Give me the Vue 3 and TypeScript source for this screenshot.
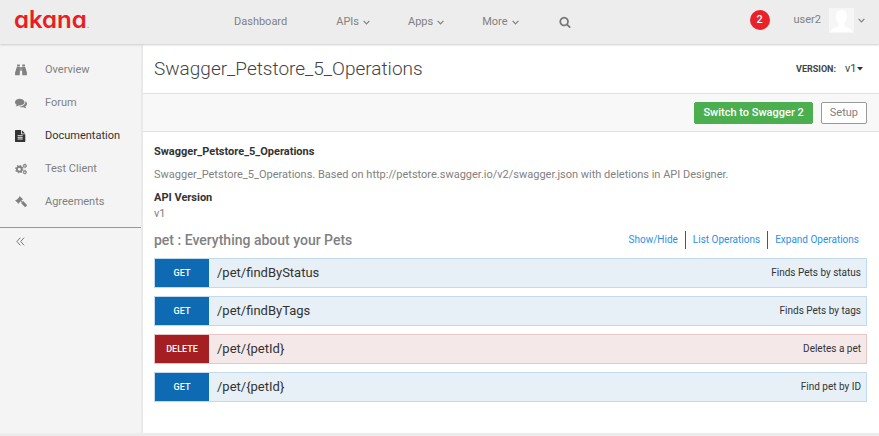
<script setup lang="ts">
import { ref } from 'vue'

interface NavItem {
  label: string
  menu: boolean
}

interface SideItem {
  label: string
  icon: 'binoculars' | 'comments' | 'file' | 'cogs' | 'gavel'
}

interface Operation {
  method: 'GET' | 'DELETE'
  path: string
  summary: string
}

const navItems: NavItem[] = [
  { label: 'Dashboard', menu: false },
  { label: 'APIs', menu: true },
  { label: 'Apps', menu: true },
  { label: 'More', menu: true },
]

const sideItems: SideItem[] = [
  { label: 'Overview', icon: 'binoculars' },
  { label: 'Forum', icon: 'comments' },
  { label: 'Documentation', icon: 'file' },
  { label: 'Test Client', icon: 'cogs' },
  { label: 'Agreements', icon: 'gavel' },
]

const operations: Operation[] = [
  { method: 'GET', path: '/pet/findByStatus', summary: 'Finds Pets by status' },
  { method: 'GET', path: '/pet/findByTags', summary: 'Finds Pets by tags' },
  { method: 'DELETE', path: '/pet/{petId}', summary: 'Deletes a pet' },
  { method: 'GET', path: '/pet/{petId}', summary: 'Find pet by ID' },
]

const active = ref('Documentation')
const version = ref('v1')
</script>

<template>
  <div class="page">
    <header class="topbar">
      <a href="#" class="brand">akana<span class="mark">.</span></a>
      <nav class="nav">
        <a v-for="item in navItems" :key="item.label" href="#" class="nav-link" :class="{ plain: !item.menu }">
          {{ item.label }}
          <svg v-if="item.menu" class="chevron" viewBox="0 0 7 5"><path d="M.6 .8 3.5 3.8 6.4 .8" /></svg>
        </a>
        <button type="button" class="search" aria-label="Search">
          <svg viewBox="0 0 1792 1792"><path d="M1216 832q0-185-131.5-316.5t-316.5-131.5-316.5 131.5-131.5 316.5 131.5 316.5 316.5 131.5 316.5-131.5 131.5-316.5zm512 832q0 52-38 90t-90 38q-54 0-90-38l-343-342q-179 124-399 124-143 0-273.5-55.5t-225-150-150-225-55.5-273.5 55.5-273.5 150-225 225-150 273.5-55.5 273.5 55.5 225 150 150 225 55.5 273.5q0 220-124 399l343 343q37 37 37 90z" /></svg>
        </button>
      </nav>
      <div class="account">
        <a href="#" class="badge">2</a>
        <button type="button" class="user">
          user2
          <svg class="avatar" viewBox="0 0 25 25">
            <rect width="25" height="25" fill="#f6f6f6" />
            <path d="M12.500 2c3.600 0 5.700 2.500 5.500 6.200-.1 3.100-1.100 5.300-2.600 6.800v2.200c0 1.200 1 1.700 2.700 2.300 3.200 1.100 5 2 5.400 4.500H1.500c.4-2.500 2.200-3.400 5.400-4.500 1.700-.6 2.700-1.100 2.700-2.300V15C8.100 13.500 7.100 11.300 7 8.200 6.800 4.500 8.900 2 12.500 2z" fill="#fff" />
          </svg>
          <svg class="chevron" viewBox="0 0 7 5"><path d="M.6 .8 3.5 3.8 6.400 .8" /></svg>
        </button>
      </div>
    </header>

    <div class="body">
      <aside class="sidebar">
        <nav class="side-nav">
          <a
            v-for="item in sideItems"
            :key="item.label"
            href="#"
            class="side-link"
            :class="{ active: item.label === active }"
            @click.prevent="active = item.label"
          >
            <svg v-if="item.icon === 'binoculars'" class="icon" viewBox="0.400 .4 13.200 13.200">
              <path d="M2.700 1h3v2h-3zM8.300 1h3v2h-3zM2.500 3.400h3.300v4.400L5.600 12.800H.5V9.800zM8.200 3.400h3.300l2 6.400v3H8.400l-.2-5zM6.100 3.800h1.800v4H6.100z" />
            </svg>
            <svg v-else-if="item.icon === 'comments'" class="icon" viewBox="0 0 1792 1792">
              <path d="M1408 768q0 139-94 257t-256.500 186.500-353.500 68.500q-86 0-176-16-124 88-278 128-36 9-86 16h-3q-11 0-20.500-8t-11.500-21q-1-3-1-6.500t.5-6.500 2-6l2.500-5 3.500-5.500 4-5 4.500-5 4-4.500q5-6 23-25t26-29.500 22.500-29 25-38.500 20.500-44q-124-72-195-177t-71-224q0-139 94-257t256.500-186.500 353.500-68.500 353.500 68.500 256.500 186.500 94 257zm384 256q0 120-71 224.500t-195 176.500q10 24 20.500 44t25 38.500 22.500 29 26 29.500 23 25q1 1 4 4.500t4.500 5 4 5 3.500 5.500l2.500 5 2 6 .5 6.500-1 6.500q-3 14-13 22t-22 7q-50-7-86-16-154-40-278-128-90 16-176 16-271 0-472-132 58 4 88 4 161 0 309-45t264-129q125-92 192-212t67-254q0-77-23-152 129 71 204 178t75 230z" />
            </svg>
            <svg v-else-if="item.icon === 'file'" class="icon" viewBox="128 0 1792 1792">
              <path d="M1596 476q14 14 28 36h-472v-472q22 14 36 28zm-476 164h544v1056q0 40-28 68t-68 28h-1344q-40 0-68-28t-28-68v-1600q0-40 28-68t68-28h800v544q0 40 28 68t68 28zm160 736v-64q0-14-9-23t-23-9h-704q-14 0-23 9t-9 23v64q0 14 9 23t23 9h704q14 0 23-9t9-23zm0-256v-64q0-14-9-23t-23-9h-704q-14 0-23 9t-9 23v64q0 14 9 23t23 9h704q14 0 23-9t9-23zm0-256v-64q0-14-9-23t-23-9h-704q-14 0-23 9t-9 23v64q0 14 9 23t23 9h704q14 0 23-9t9-23z" />
            </svg>
            <svg v-else-if="item.icon === 'cogs'" class="icon line" viewBox="0 0 14 14">
              <circle cx="5" cy="7.200" r="2.800" stroke-width="2.100" />
              <circle cx="5" cy="7.200" r="4.200" stroke-width="1.400" stroke-dasharray="1.650 1.650" />
              <circle cx="11.500" cy="3.400" r="1.500" stroke-width="1.200" />
              <circle cx="11.500" cy="3.400" r="2.200" stroke-width=".9" stroke-dasharray="1.150 1.150" />
              <circle cx="11.500" cy="10.700" r="1.500" stroke-width="1.200" />
              <circle cx="11.500" cy="10.700" r="2.200" stroke-width=".9" stroke-dasharray="1.150 1.150" />
            </svg>
            <svg v-else class="icon" viewBox=".7 .7 13 13">
              <path d="M6 .9 9.300 4.200 8.700 5.100 8.200 4.900 7.600 5.500 8.900 6.800 9.600 6.200 13.400 10.200q.5.700-.1 1.300l-.9.900q-.7.600-1.300 0L7.400 8.500 8 7.800 6.700 6.400 5.200 7.900 5.400 8.400 4.500 9.100.9 5.600 1.700 4.700 2.300 4.900 5.200 2 5.100 1.500z" />
            </svg>
            {{ item.label }}
          </a>
        </nav>
        <button type="button" class="collapse" aria-label="Collapse">
          <svg viewBox="0 0 9 9"><path d="M4.300 .7.9 4.500 4.300 8.300M8.100 .7 4.700 4.500 8.100 8.300" /></svg>
        </button>
      </aside>

      <main class="main">
        <section class="title-row">
          <h1>Swagger_Petstore_5_Operations</h1>
          <div class="version">
            <label for="version">VERSION:</label>
            <span class="picker">
              <select id="version" v-model="version"><option>v1</option></select>
              <svg viewBox="0 0 6 4"><path d="M0 0h6L3 3.500z" /></svg>
            </span>
          </div>
        </section>
        <section class="toolbar">
          <button type="button" class="btn primary">Switch to Swagger 2</button>
          <button type="button" class="btn">Setup</button>
        </section>
        <section class="content">
          <h2>Swagger_Petstore_5_Operations</h2>
          <p class="description">Swagger_Petstore_5_Operations. Based on http://petstore.swagger.io/v2/swagger.json with deletions in API Designer.</p>
          <h2>API Version</h2>
          <p>v1</p>
          <div class="resource">
            <h3>pet : Everything about your Pets</h3>
            <ul class="options">
              <li><a href="#">Show/Hide</a></li>
              <li><a href="#">List Operations</a></li>
              <li><a href="#">Expand Operations</a></li>
            </ul>
          </div>
          <ul class="operations">
            <li v-for="op in operations" :key="op.method + op.summary" class="operation" :class="op.method.toLowerCase()">
              <a href="#" class="method">{{ op.method }}</a>
              <a href="#" class="path">{{ op.path }}</a>
              <a href="#" class="summary">{{ op.summary }}</a>
            </li>
          </ul>
        </section>
      </main>
    </div>
  </div>
</template>

<style>
body {
  background: #fff;
}
</style>

<style scoped>
* {
  box-sizing: border-box;
}

.page {
  display: flex;
  flex-direction: column;
  min-height: 100vh;
  border-bottom: 3px solid #ececec;
  font: 11px/16px Roboto, sans-serif;
  color: #818181;
}

a {
  color: inherit;
  text-decoration: none;
}

button {
  font: inherit;
  color: inherit;
  padding: 0;
  border: 0;
  background: none;
  cursor: pointer;
}

h1,
h2,
h3,
p,
ul {
  margin: 0;
  padding: 0;
}

ul {
  list-style: none;
}

.topbar {
  display: flex;
  align-items: center;
  height: 44px;
  padding: 0 14px;
  background: #ededed;
  box-shadow: 0 1px 2px #ccc;
  position: relative;
}

.brand {
  width: 220px;
  font: 600 24px/40px Inter, sans-serif;
  font-feature-settings: 'cv11' 1;
  color: #ea1d25;
}

.mark {
  font-size: 8px;
  color: #aaa;
}

.nav {
  display: flex;
  align-items: center;
  gap: 38px;
}

.nav-link {
  display: flex;
  align-items: center;
  gap: 4px;
}

.nav-link.plain {
  margin-right: 11px;
}

.chevron {
  width: 7px;
  height: 5px;
  fill: none;
  stroke: currentColor;
  stroke-width: 1.2;
}

.search {
  display: flex;
  margin-left: 2px;
}

.search svg {
  width: 12px;
  height: 12px;
  fill: #777;
}

.account {
  display: flex;
  align-items: center;
  gap: 24px;
  margin-left: auto;
  padding-bottom: 4px;
}

.badge {
  width: 20px;
  height: 20px;
  border-radius: 50%;
  background: #e8212a;
  color: #fff;
  font-weight: 500;
  line-height: 20px;
  text-align: center;
}

.user {
  display: flex;
  align-items: center;
  gap: 4px;
}

.avatar {
  width: 25px;
  height: 25px;
  margin-left: 4px;
}

.body {
  display: flex;
  flex: 1;
}

.sidebar {
  flex: none;
  width: 143px;
  background: #f4f4f4;
  border-right: 2px solid #e9e9e9;
}

.side-nav {
  padding: 9px 0;
  border-bottom: 1px solid #999;
}

.side-link {
  display: flex;
  align-items: center;
  gap: 18px;
  height: 33px;
  padding-left: 15px;
}

.side-link.active {
  color: #333;
}

.icon {
  width: 12px;
  height: 12px;
  fill: currentColor;
}

.icon.line {
  fill: none;
  stroke: currentColor;
}

.collapse {
  display: flex;
  padding: 9px 16px;
}

.collapse svg {
  width: 9px;
  height: 9px;
  fill: none;
  stroke: #777;
}

.main {
  flex: 1;
  min-width: 0;
}

.title-row {
  display: flex;
  align-items: center;
  justify-content: space-between;
  height: 50px;
  padding: 0 16px 0 11px;
  border-bottom: 1px solid #e1e1e1;
}

h1 {
  font-size: 19px;
  font-weight: 300;
  line-height: 24px;
  color: #444;
}

.version {
  display: flex;
  align-items: center;
  gap: 9px;
  color: #444;
}

.version label {
  font-size: 9px;
  font-weight: 700;
}

.picker {
  display: flex;
  align-items: center;
}

.picker select {
  appearance: none;
  padding: 0;
  border: 0;
  background: none;
  font: inherit;
  color: inherit;
}

.picker svg {
  width: 6px;
  height: 4px;
  fill: #333;
}

.toolbar {
  display: flex;
  align-items: center;
  justify-content: flex-end;
  gap: 8px;
  height: 38px;
  padding: 0 12px;
  background: #f8f8f8;
  border-bottom: 1px solid #e1e1e1;
}

.btn {
  height: 22px;
  padding: 0 8px;
  border: 1px solid #999;
  border-radius: 2px;
  background: #fff;
}

.btn.primary {
  border-color: #4bae4f;
  background: #4bae4f;
  color: #fff;
  font-weight: 500;
}

.content {
  padding: 12px 12px 24px 11px;
}

h2 {
  font-size: 11px;
  font-weight: 700;
  line-height: 16px;
  color: #333;
}

.description {
  margin: 7px 0;
}

.content p {
  line-height: 16px;
}

.resource {
  display: flex;
  align-items: center;
  justify-content: space-between;
  margin: 8px 0;
}

h3 {
  font-size: 14px;
  font-weight: 500;
  line-height: 20px;
}

.options {
  display: flex;
  padding-right: 8px;
  font-size: 10px;
  line-height: 18px;
  color: #2b90ea;
}

.options li + li {
  margin-left: 7px;
  padding-left: 7px;
  border-left: 1px solid #555;
}

.operations {
  display: flex;
  flex-direction: column;
  gap: 8px;
}

.operation {
  display: flex;
  align-items: center;
  height: 30px;
  padding-right: 5px;
  border: 1px solid #c3d9ec;
  background: #e7f0f7;
  color: #333;
}

.operation.delete {
  border-color: #e8c6c7;
  background: #f5e8e8;
}

.method {
  width: 54px;
  background: #0f6ab4;
  color: #fff;
  font-size: 9px;
  font-weight: 500;
  line-height: 28px;
  text-align: center;
}

.delete .method {
  background: #a41e22;
}

.path {
  padding-left: 8px;
  font-size: 13px;
}

.summary {
  margin-left: auto;
  font-size: 10px;
}
</style>
